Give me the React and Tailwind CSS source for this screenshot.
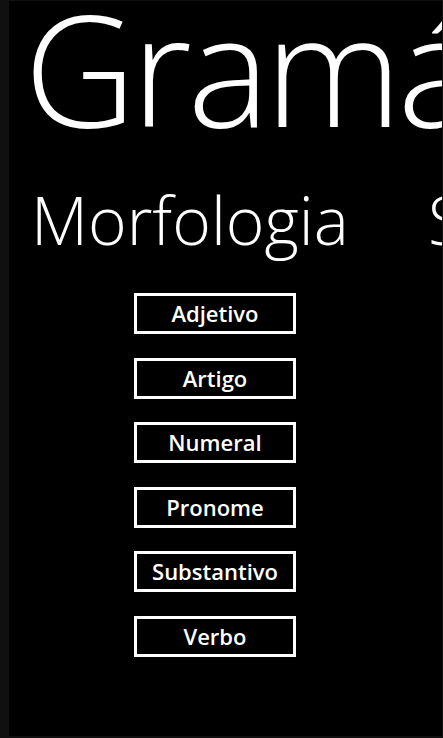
export default function App() {
  const items = ["Adjetivo", "Artigo", "Numeral", "Pronome", "Substantivo", "Verbo"];
  return (
    <div className="w-[443px] h-[738px] bg-[#101010] pl-[9px] pt-px pr-px pb-[2px]" style={{ fontFamily: '"Open Sans", "Noto Sans", sans-serif' }}>
      <div className="w-full h-full bg-black overflow-hidden text-white relative">
        <div className="whitespace-nowrap font-light text-[155px] leading-none tracking-[-4.5px] ml-[15px] mt-[-12px]">Gramática</div>
        <div className="flex mt-[42px] whitespace-nowrap">
          <div className="w-[419px] shrink-0 pl-[22px]">
            <div className="font-light text-[66px] leading-none">Morfologia</div>
            <div className="flex flex-col gap-[23.6px] ml-[103px] mt-[41px]">
              {items.map((t) => (
                <button key={t} className="w-[162px] h-[41px] border-[3px] border-white flex items-center justify-center text-[22px] font-semibold leading-none pb-px">
                  {t}
                </button>
              ))}
            </div>
          </div>
          <div className="shrink-0 font-light text-[66px] leading-none">Sintaxe</div>
        </div>
      </div>
    </div>
  );
}
